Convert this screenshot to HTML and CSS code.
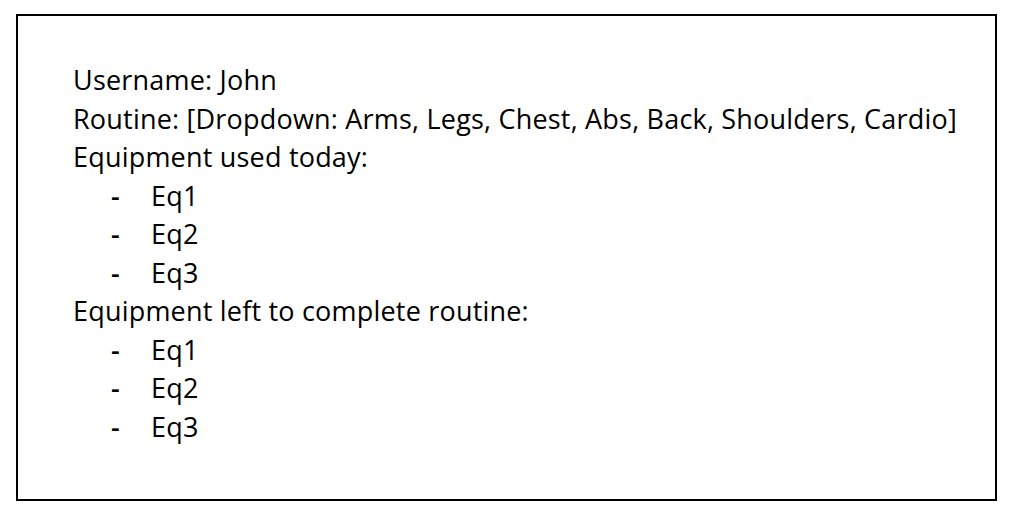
FILE: index.html
```html
<!DOCTYPE html>
<html>
<head>
<meta charset="utf-8">
<link rel="stylesheet" href="styles.css">
</head>
<body>
<div class="frame">
  <div class="line">Username: John</div>
  <div class="line">Routine: [Dropdown: Arms, Legs, Chest, Abs, Back, Shoulders, Cardio]</div>
  <div class="line">Equipment used today:</div>
  <ul class="list">
    <li><span class="dash">-</span><span>Eq1</span></li>
    <li><span class="dash">-</span><span>Eq2</span></li>
    <li><span class="dash">-</span><span>Eq3</span></li>
  </ul>
  <div class="line">Equipment left to complete routine:</div>
  <ul class="list">
    <li><span class="dash">-</span><span>Eq1</span></li>
    <li><span class="dash">-</span><span>Eq2</span></li>
    <li><span class="dash">-</span><span>Eq3</span></li>
  </ul>
</div>
</body>
</html>
```
FILE: styles.css
```css
html, body {
  margin: 0;
  padding: 0;
  background: #ffffff;
}
body {
  font-family: "Open Sans", "Noto Sans", sans-serif;
  font-size: 27px;
  line-height: 38.5px;
  letter-spacing: 0.2px;
  color: #000000;
}
.frame {
  box-sizing: border-box;
  margin: 14px 0 0 16px;
  width: 981px;
  height: 487px;
  border: 2px solid #000000;
  padding: 45px 0 0 55px;
}
.list {
  list-style: none;
  margin: 0;
  padding: 0 0 0 38px;
}
.list li {
  display: grid;
  grid-template-columns: 40px auto;
}
.dash {
  font-weight: 600;
}
```
